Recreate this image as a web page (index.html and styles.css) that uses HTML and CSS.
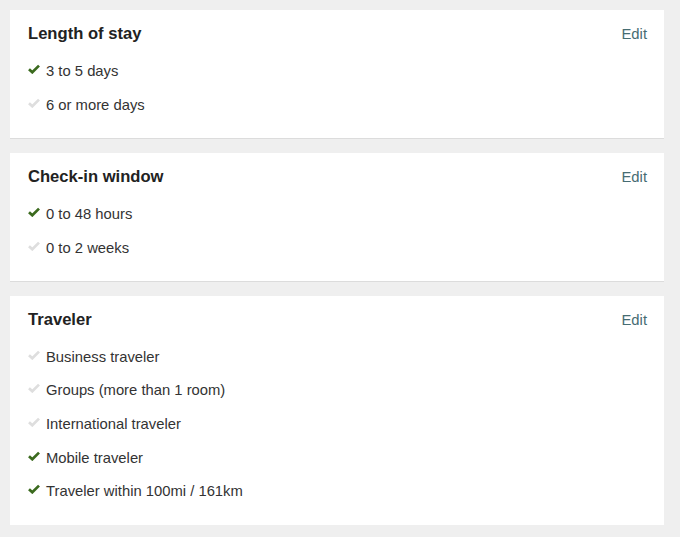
FILE: index.html
```html
<!DOCTYPE html>
<html>
<head>
<meta charset="utf-8">
<link rel="stylesheet" href="styles.css">
</head>
<body>
<div class="page">
  <section class="card">
    <div class="card-head">
      <h2 class="title">Length of stay</h2>
      <a class="edit" href="#">Edit</a>
    </div>
    <ul class="list">
      <li class="item on"><svg class="chk" viewBox="0 0 12 10"><path d="M1 5.2 L4.3 8.3 L11 1.6"/></svg>3 to 5 days</li>
      <li class="item off"><svg class="chk" viewBox="0 0 12 10"><path d="M1 5.2 L4.3 8.3 L11 1.6"/></svg>6 or more days</li>
    </ul>
  </section>
  <section class="card">
    <div class="card-head">
      <h2 class="title">Check-in window</h2>
      <a class="edit" href="#">Edit</a>
    </div>
    <ul class="list">
      <li class="item on"><svg class="chk" viewBox="0 0 12 10"><path d="M1 5.2 L4.3 8.3 L11 1.6"/></svg>0 to 48 hours</li>
      <li class="item off"><svg class="chk" viewBox="0 0 12 10"><path d="M1 5.2 L4.3 8.3 L11 1.6"/></svg>0 to 2 weeks</li>
    </ul>
  </section>
  <section class="card">
    <div class="card-head">
      <h2 class="title">Traveler</h2>
      <a class="edit" href="#">Edit</a>
    </div>
    <ul class="list">
      <li class="item off"><svg class="chk" viewBox="0 0 12 10"><path d="M1 5.2 L4.3 8.3 L11 1.6"/></svg>Business traveler</li>
      <li class="item off"><svg class="chk" viewBox="0 0 12 10"><path d="M1 5.2 L4.3 8.3 L11 1.6"/></svg>Groups (more than 1 room)</li>
      <li class="item off"><svg class="chk" viewBox="0 0 12 10"><path d="M1 5.2 L4.3 8.3 L11 1.6"/></svg>International traveler</li>
      <li class="item on"><svg class="chk" viewBox="0 0 12 10"><path d="M1 5.2 L4.3 8.3 L11 1.6"/></svg>Mobile traveler</li>
      <li class="item on"><svg class="chk" viewBox="0 0 12 10"><path d="M1 5.2 L4.3 8.3 L11 1.6"/></svg>Traveler within 100mi / 161km</li>
    </ul>
  </section>
</div>
</body>
</html>
```
FILE: styles.css
```css
html, body {
  margin: 0;
  padding: 0;
  background: #efefef;
}
body {
  font-family: "Liberation Sans", Arial, sans-serif;
  color: #333;
}
.page {
  width: 654px;
  padding: 10px 0 0 10px;
  display: flex;
  flex-direction: column;
  gap: 14.5px;
}
.card {
  background: #fff;
  box-shadow: 0 1px 0 #dcdcdc;
  padding: 14px 17px 16.75px 18px;
}
.card-head {
  display: flex;
  justify-content: space-between;
  align-items: center;
  height: 20px;
}
.title {
  margin: 0;
  font-size: 16.6px;
  font-weight: bold;
  color: #222;
  line-height: 20px;
}
.edit {
  font-size: 14.8px;
  color: #466c73;
  text-decoration: none;
  line-height: 20px;
}
.list {
  list-style: none;
  margin: 10.25px 0 0 0;
  padding: 0;
}
.item {
  height: 33.67px;
  display: flex;
  align-items: center;
  font-size: 14.8px;
  color: #333;
}
.chk {
  width: 12px;
  height: 10px;
  margin: -4px 6px 0 0;
  fill: none;
  stroke-width: 2.7;
  stroke-linecap: butt;
  stroke-linejoin: miter;
}
.on .chk { stroke: #3b6a1e; }
.off .chk { stroke: #dedede; }
```
